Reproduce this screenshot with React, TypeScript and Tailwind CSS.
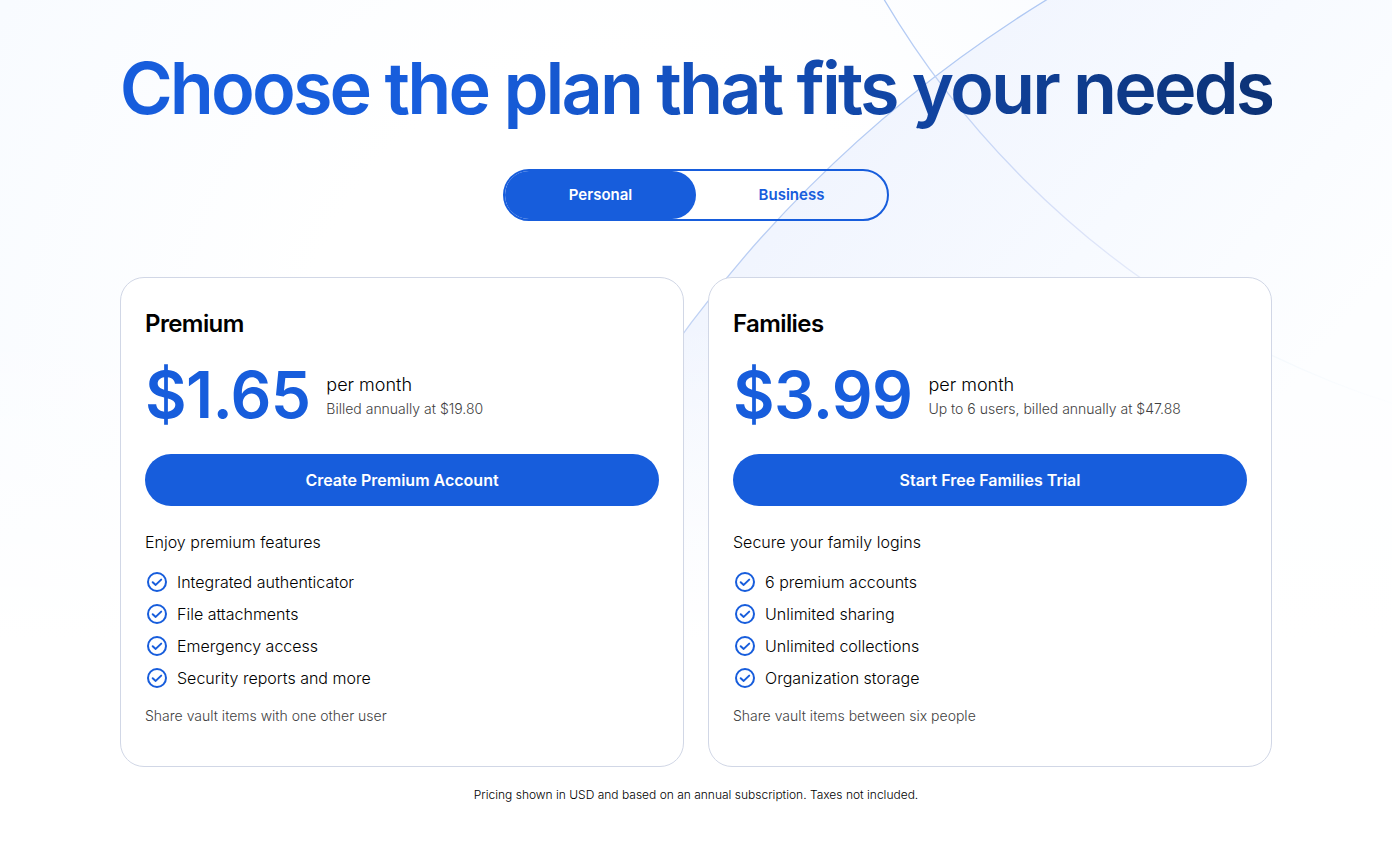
import { useState } from "react";

type Plan = {
  name: string;
  price: string;
  billing: string;
  cta: string;
  intro: string;
  features: string[];
  note: string;
};

const plans: Plan[] = [
  {
    name: "Premium",
    price: "$1.65",
    billing: "Billed annually at $19.80",
    cta: "Create Premium Account",
    intro: "Enjoy premium features",
    features: ["Integrated authenticator", "File attachments", "Emergency access", "Security reports and more"],
    note: "Share vault items with one other user",
  },
  {
    name: "Families",
    price: "$3.99",
    billing: "Up to 6 users, billed annually at $47.88",
    cta: "Start Free Families Trial",
    intro: "Secure your family logins",
    features: ["6 premium accounts", "Unlimited sharing", "Unlimited collections", "Organization storage"],
    note: "Share vault items between six people",
  },
];

function Backdrop() {
  return (
    <svg
      className="absolute inset-x-0 top-0 w-full"
      viewBox="0 0 1392 640"
      preserveAspectRatio="xMidYMin slice"
      aria-hidden="true"
    >
      <defs>
        <radialGradient id="wash" gradientUnits="userSpaceOnUse" cx="620" cy="380" r="720">
          <stop offset="0.45" stopColor="#f8fbff" stopOpacity="0" />
          <stop offset="1" stopColor="#f8fbff" />
        </radialGradient>
        <linearGradient id="disc" gradientUnits="userSpaceOnUse" x1="860" y1="130" x2="1240" y2="450">
          <stop offset="0" stopColor="#f1f5fe" />
          <stop offset="0.5" stopColor="#f7faff" />
          <stop offset="1" stopColor="#fdfeff" />
        </linearGradient>
        <linearGradient id="discLine" gradientUnits="userSpaceOnUse" x1="0" y1="0" x2="0" y2="600">
          <stop offset="0" stopColor="#afc8f3" />
          <stop offset="0.5" stopColor="#bccff3" />
          <stop offset="1" stopColor="#c6d5f3" stopOpacity="0" />
        </linearGradient>
        <linearGradient id="arcLine" gradientUnits="userSpaceOnUse" x1="884" y1="0" x2="1392" y2="400">
          <stop offset="0" stopColor="#afc8f3" />
          <stop offset="0.45" stopColor="#dbe2f8" />
          <stop offset="0.75" stopColor="#f0f6fc" />
          <stop offset="1" stopColor="#fbfdff" />
        </linearGradient>
        <linearGradient id="fade" x1="0" y1="0" x2="0" y2="1">
          <stop offset="0.5" stopColor="#fff" stopOpacity="0" />
          <stop offset="1" stopColor="#fff" />
        </linearGradient>
      </defs>
      <rect width="1392" height="640" fill="url(#wash)" />
      <circle cx="1722" cy="1100" r="1291" fill="url(#disc)" stroke="url(#discLine)" strokeWidth="1.3" />
      <circle cx="1668" cy="-465" r="911" fill="none" stroke="url(#arcLine)" strokeWidth="1.3" />
      <rect width="1392" height="640" fill="url(#fade)" />
    </svg>
  );
}

function CheckIcon() {
  return (
    <svg className="size-6 shrink-0" viewBox="0 0 24 24" fill="none" stroke="#175ddc" strokeWidth="2" aria-hidden="true">
      <circle cx="12" cy="12" r="9" />
      <path d="M7.7 12.2l3 2.7 5.5-5.3" strokeLinecap="round" strokeLinejoin="round" />
    </svg>
  );
}

function PlanCard({ plan }: { plan: Plan }) {
  return (
    <article className="rounded-3xl border border-[#d1d7e6] bg-white px-6 pt-7 pb-10">
      <h2 className="text-2xl leading-9 font-semibold tracking-tight">{plan.name}</h2>

      <div className="mt-[18px] flex items-center gap-4">
        <p className="text-[64px] leading-[70px] font-semibold tracking-[-0.01em] text-[#175ddc]">{plan.price}</p>
        <div>
          <p className="text-lg leading-7 font-light">per month</p>
          <p className="text-sm leading-5 font-light text-[#3f3f3f]">{plan.billing}</p>
        </div>
      </div>

      <button type="button" className="mt-6 h-[52px] w-full rounded-full bg-[#175ddc] font-semibold text-white">
        {plan.cta}
      </button>

      <p className="mt-6 font-light">{plan.intro}</p>
      <ul className="mt-4 space-y-2">
        {plan.features.map((feature) => (
          <li key={feature} className="flex items-center gap-2 font-light">
            <CheckIcon />
            {feature}
          </li>
        ))}
      </ul>
      <p className="mt-4 text-sm font-light text-[#3f3f3f]">{plan.note}</p>
    </article>
  );
}

export default function App() {
  const [audience, setAudience] = useState("Personal");

  return (
    <main className="relative min-h-screen overflow-hidden bg-white font-['Inter',sans-serif] text-black">
      <Backdrop />

      <div className="relative mx-auto flex max-w-[1200px] flex-col items-center px-6 pt-[43px] pb-10">
        <h1 className="bg-linear-to-r from-[#175ddc] from-30% to-[#0c3276] bg-clip-text text-center text-7xl leading-[90px] font-semibold tracking-[-0.04em] text-transparent xl:whitespace-nowrap">
          Choose the plan that fits your needs
        </h1>

        {/* Audience switch */}
        <div className="mt-9 flex h-[52px] w-full max-w-[386px] rounded-full border-2 border-[#175ddc]">
          {["Personal", "Business"].map((label) => (
            <button
              key={label}
              type="button"
              aria-pressed={audience === label}
              onClick={() => setAudience(label)}
              className={`flex-1 rounded-full text-[15px] font-semibold ${
                audience === label ? "bg-[#175ddc] text-white" : "text-[#175ddc]"
              }`}
            >
              {label}
            </button>
          ))}
        </div>

        {/* Plans */}
        <section className="mt-14 grid w-full grid-cols-1 gap-6 md:grid-cols-2">
          {plans.map((plan) => (
            <PlanCard key={plan.name} plan={plan} />
          ))}
        </section>

        <p className="mt-5 text-xs font-light">
          Pricing shown in USD and based on an annual subscription. Taxes not included.
        </p>
      </div>
    </main>
  );
}
